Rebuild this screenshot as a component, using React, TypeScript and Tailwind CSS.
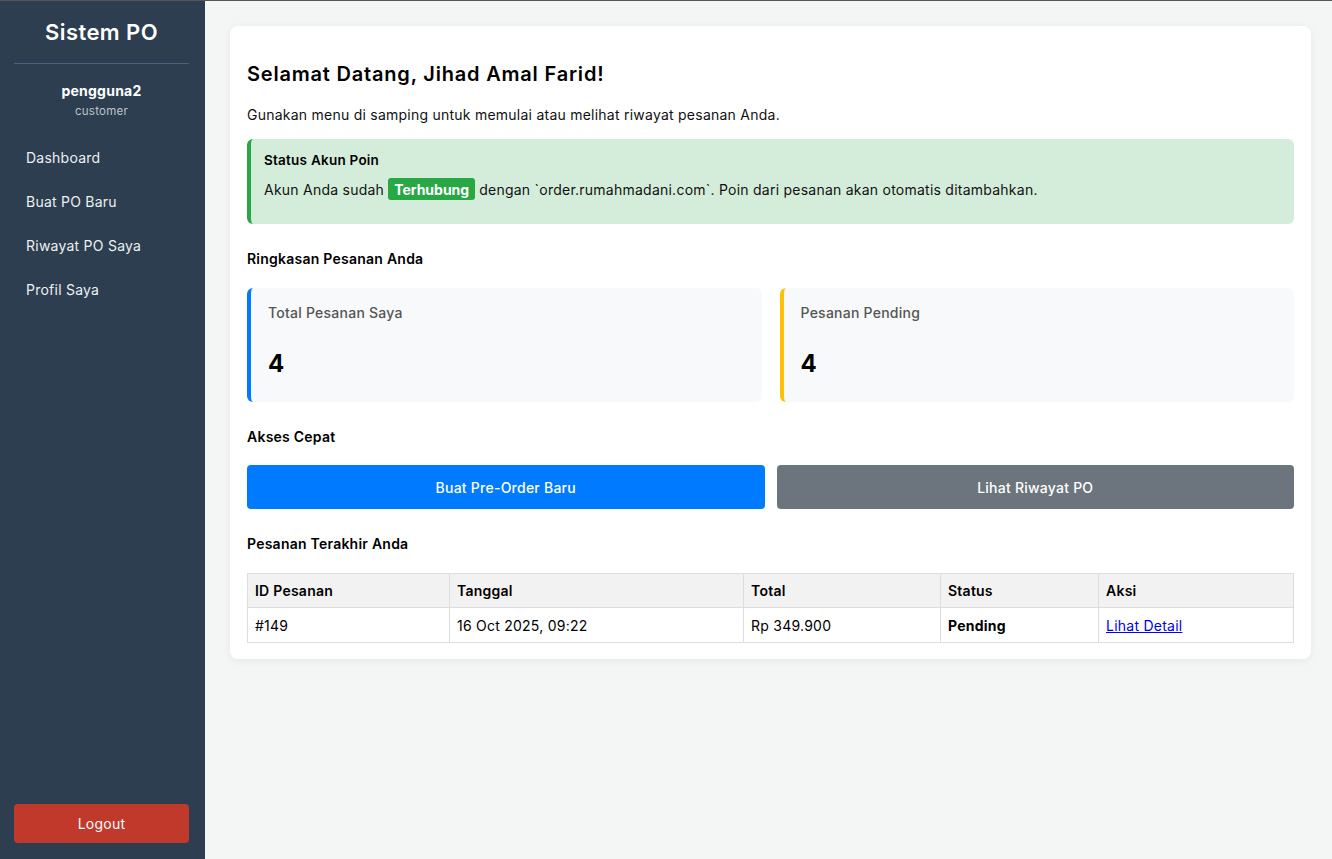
import React from 'react';

const font = { fontFamily: 'Inter, "Noto Sans", sans-serif' };

const navItems = ['Dashboard', 'Buat PO Baru', 'Riwayat PO Saya', 'Profil Saya'];

function Sidebar() {
  return (
    <aside className="w-[205px] shrink-0 bg-[#2c3e50] text-white flex flex-col pl-[14px] pr-[16px]">
      <div className="pt-[15px] pb-[14px] border-b border-[#4a6180] text-center">
        <h1 className="text-[22px] leading-[33px] font-semibold tracking-[0.02em]">Sistem PO</h1>
      </div>
      <div className="text-center mt-[16px]">
        <div className="text-[14px] leading-[21px] font-bold">pengguna2</div>
        <div className="text-[11.5px] leading-[17px] text-[#bdc3c7] mt-[2px]">customer</div>
      </div>
      <nav className="mt-[15px] flex flex-col">
        {navItems.map((item) => (
          <a key={item} className="px-[12px] py-[11.5px] text-[14px] leading-[21px] text-[#ecf0f1]">
            {item}
          </a>
        ))}
      </nav>
      <button className="mt-auto mb-[16px] h-[39px] w-full rounded bg-[#c0392b] text-[14px] text-white">
        Logout
      </button>
    </aside>
  );
}

function StatCard({ label, value, border }: { label: string; value: number; border: string }) {
  return (
    <div className={`flex-1 h-[114px] rounded-md bg-[#f8f9fa] border-l-4 ${border} pl-[17px] pt-[14px]`}>
      <div className="text-[14px] leading-[21px] font-medium text-[#555]">{label}</div>
      <div className="mt-[25px] text-[24px] leading-[32px] font-bold text-black">{value}</div>
    </div>
  );
}

export default function App() {
  return (
    <div style={font} className="min-h-screen flex flex-col tracking-[0.015em]">
      <div className="h-px bg-[#555]" />
      <div className="flex flex-1 h-[858px]">
        <Sidebar />
        <main className="flex-1 bg-[#f4f6f6] pl-[25px] pr-[21px] pt-[25px]">
          <div className="bg-white rounded-lg shadow-[0_2px_8px_rgba(0,0,0,0.06)] px-[17px] pt-[17px] pb-[16px] text-[#111]">
            <h2 className="mt-4 text-[20px] leading-[30px] font-semibold text-black tracking-[0.04em]">
              Selamat Datang, Jihad Amal Farid!
            </h2>
            <p className="mt-[15px] text-[14px] leading-[21px]">
              Gunakan menu di samping untuk memulai atau melihat riwayat pesanan Anda.
            </p>

            <div className="mt-[14px] h-[85px] rounded-md bg-[#d4edda] border-l-4 border-[#28a745] pl-[13px] pt-[11px]">
              <div className="text-[13.5px] leading-[21px] font-semibold text-black">Status Akun Poin</div>
              <div className="mt-[6px] h-[24px] flex items-center text-[14px]">
                Akun Anda sudah
                <span className="mx-[4px] inline-flex items-center h-[22px] px-[6px] rounded-[3px] bg-[#28a745] text-white font-bold tracking-normal">
                  Terhubung
                </span>
                dengan `order.rumahmadani.com`. Poin dari pesanan akan otomatis ditambahkan.
              </div>
            </div>

            <h3 className="mt-6 text-[14px] leading-[21px] font-semibold text-black">Ringkasan Pesanan Anda</h3>
            <div className="mt-[19px] flex gap-[18px]">
              <StatCard label="Total Pesanan Saya" value={4} border="border-[#007bff]" />
              <StatCard label="Pesanan Pending" value={4} border="border-[#ffc107]" />
            </div>

            <h3 className="mt-6 text-[14px] leading-[21px] font-semibold text-black">Akses Cepat</h3>
            <div className="mt-[18px] flex gap-[12px]">
              <button className="flex-1 h-[44px] rounded bg-[#007bff] text-white text-[14px] font-medium">
                Buat Pre-Order Baru
              </button>
              <button className="flex-1 h-[44px] rounded bg-[#6c757d] text-white text-[14px] font-medium">
                Lihat Riwayat PO
              </button>
            </div>

            <h3 className="mt-6 text-[14px] leading-[21px] font-semibold text-black">Pesanan Terakhir Anda</h3>
            <table className="mt-[19px] w-full border-collapse text-[14px] text-black">
              <thead>
                <tr className="bg-[#f2f2f2] h-[34px]">
                  <th className="w-[202px] border border-[#ddd] px-[7px] text-left font-semibold">ID Pesanan</th>
                  <th className="w-[294px] border border-[#ddd] px-[7px] text-left font-semibold">Tanggal</th>
                  <th className="w-[197px] border border-[#ddd] px-[7px] text-left font-semibold">Total</th>
                  <th className="w-[158px] border border-[#ddd] px-[7px] text-left font-semibold">Status</th>
                  <th className="border border-[#ddd] px-[7px] text-left font-semibold">Aksi</th>
                </tr>
              </thead>
              <tbody>
                <tr className="h-[35px]">
                  <td className="border border-[#ddd] px-[7px]">#149</td>
                  <td className="border border-[#ddd] px-[7px]">16 Oct 2025, 09:22</td>
                  <td className="border border-[#ddd] px-[7px]">Rp 349.900</td>
                  <td className="border border-[#ddd] px-[7px] font-bold">Pending</td>
                  <td className="border border-[#ddd] px-[7px]">
                    <a href="#" className="text-[#0000ee] underline">Lihat Detail</a>
                  </td>
                </tr>
              </tbody>
            </table>
          </div>
        </main>
      </div>
    </div>
  );
}
